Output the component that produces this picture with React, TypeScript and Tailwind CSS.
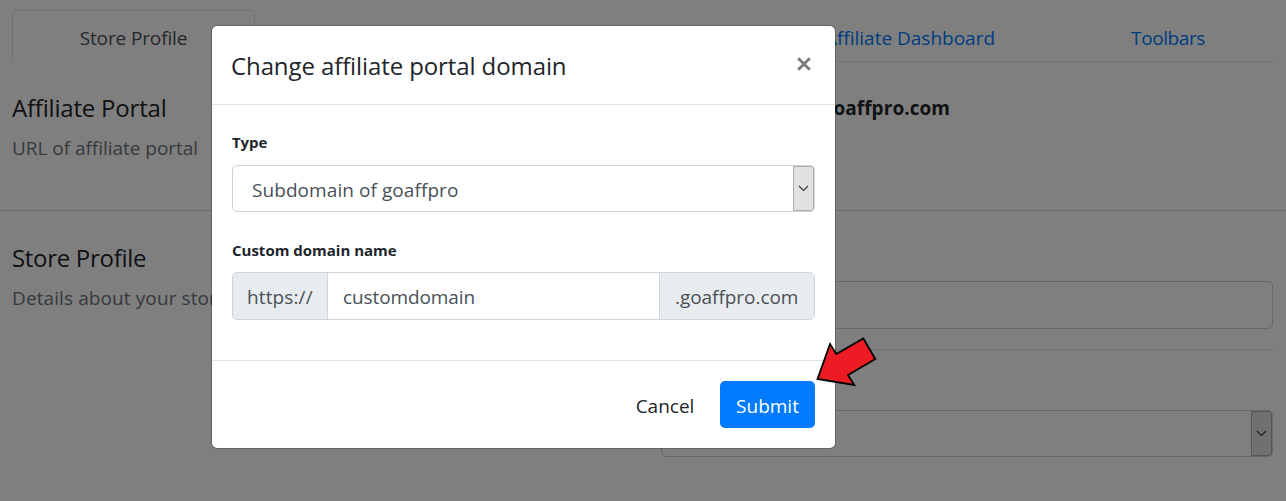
import React from "react";

function SelectArrow() {
  return (
    <span className="flex w-[21px] items-center justify-center self-stretch rounded-r-[3px] border border-[#adadad] bg-[#e1e1e1]">
      <svg width="11" height="7" viewBox="0 0 11 7" fill="none">
        <path d="M1 1L5.5 5.5L10 1" stroke="#333" strokeWidth="1.1" />
      </svg>
    </span>
  );
}

function Page() {
  return (
    <div className="h-[501px] w-[1286px] overflow-hidden bg-white pt-[10px]">
      <nav className="ml-3 mr-[13px] flex h-[52px] border-b border-[#dee2e6] text-[#007bff]">
        <div className="-mb-px flex w-[243px] justify-center rounded-t-[5px] border border-b-0 border-[#dee2e6] bg-white pt-[12px] text-[#495057]">
          <span className="h-[30px] text-[19px] leading-[30px] tracking-[-0.12px]">Store Profile</span>
        </div>
        <div className="flex flex-1 justify-end pt-[13px] text-[19px] leading-[30px]">
          <span className="px-[68px]">Affiliate Dashboard</span>
          <span className="px-[68px] tracking-[-0.4px]">Toolbars</span>
        </div>
      </nav>

      <section className="flex h-[149px] border-b border-[#d9d9d9] pl-3 pt-[31px]">
        <div className="w-[649px]">
          <h2 className="text-[24px] leading-[30px] tracking-[-0.2px]">Affiliate Portal</h2>
          <p className="mt-[10px] text-[19px] leading-[30px] tracking-[-0.03px] text-[#6c757d]">URL of affiliate portal</p>
        </div>
        <div className="flex w-[289px] justify-end">
          <b className="text-[19px] leading-[30px] tracking-[0.05px]">goaffpro.com</b>
        </div>
      </section>

      <section className="flex pl-3 pt-[32px]">
        <div className="w-[649px]">
          <h2 className="text-[24px] leading-[30px] tracking-[-0.3px]">Store Profile</h2>
          <p className="mt-[10px] text-[19px] leading-[30px] tracking-[0.1px] text-[#6c757d]">Details about your store</p>
        </div>
        <div className="w-[612px] pt-[38px]">
          <div className="h-[48px] rounded-[5px] border border-[#ced4da]" />
          <div className="mt-[20px] h-px bg-[#e5e5e5]" />
          <div className="mt-[60px] flex h-[47px] justify-end rounded-[5px] border border-[#ced4da]">
            <SelectArrow />
          </div>
        </div>
      </section>
    </div>
  );
}

function Dialog() {
  return (
    <div className="h-[424px] w-[625px] rounded-[6px] border border-black/20 bg-white bg-clip-padding">
      <header className="flex h-[79px] items-start justify-between border-b border-[#dee2e6] pl-[19px] pr-[24px] pt-[21px]">
        <h1 className="text-[24px] leading-[38px] tracking-[-0.1px]">Change affiliate portal domain</h1>
        <svg className="mt-[10px]" width="14" height="14" viewBox="0 0 14 14">
          <path d="M1.2 1.2L12.8 12.8M12.8 1.2L1.2 12.8" stroke="#7f7f7f" strokeWidth="3" />
        </svg>
      </header>

      <div className="h-[256px] border-b border-[#dee2e6] px-[20px] pt-[25px]">
        <div className="text-[15px] font-bold leading-[24px] tracking-[-0.1px]">Type</div>
        <div className="mt-[11px] flex h-[47px] justify-between rounded-[5px] border border-[#ced4da] pl-[19px]">
          <span className="pt-[9px] text-[19px] leading-[30px] tracking-[0.07px] text-[#495057]">Subdomain of goaffpro</span>
          <SelectArrow />
        </div>
        <div className="mt-[26px] text-[15px] font-bold leading-[24px]">Custom domain name</div>
        <div className="mt-[10px] flex h-[48px] overflow-hidden rounded-[5px] border border-[#ced4da] text-[19px] leading-[30px] text-[#495057]">
          <span className="w-[95px] border-r border-[#ced4da] bg-[#e9ecef] pl-[14px] pt-[9px] tracking-[0.12px]">https://</span>
          <span className="flex-1 pl-[15px] pt-[9px] tracking-[-0.1px]">customdomain</span>
          <span className="w-[155px] border-l border-[#ced4da] bg-[#e9ecef] pl-[15px] pt-[9px] tracking-[-0.05px]">.goaffpro.com</span>
        </div>
      </div>

      <footer className="flex justify-end pr-[20px] pt-[20px] text-[19px] leading-[30px]">
        <button className="mr-[10px] h-[47px] w-[90px] pb-px pt-[3px]">Cancel</button>
        <button className="h-[47px] w-[95px] rounded-[5px] bg-[#007bff] pb-px pt-[3px] text-white">Submit</button>
      </footer>
    </div>
  );
}

export default function App() {
  return (
    <div className="relative h-[501px] w-[1286px] overflow-hidden font-['Open_Sans','Noto_Sans',sans-serif] text-[#212529]">
      <Page />
      <div className="absolute inset-0 bg-black/50 pl-[211px] pt-[25px]">
        <Dialog />
      </div>
      <svg className="absolute left-[810px] top-[330px]" width="75" height="65" viewBox="810 330 75 65">
        <path
          d="M817.5 379L830 344L836.3 354L863.3 338.5L875.3 359L848 375L854.3 385Z"
          fill="#ed1c24"
          stroke="#000"
          strokeWidth="1.8"
        />
      </svg>
    </div>
  );
}
